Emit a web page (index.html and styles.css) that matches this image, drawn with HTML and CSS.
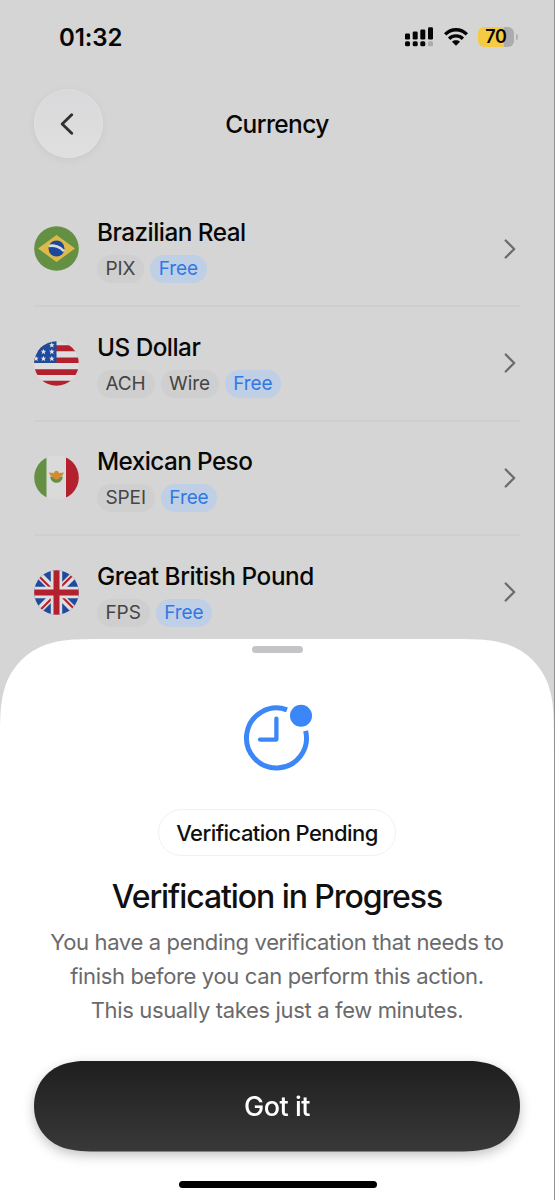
FILE: index.html
```html
<!DOCTYPE html>
<html lang="en">
<head>
<meta charset="utf-8">
<title>Currency</title>
<link rel="stylesheet" href="styles.css">
</head>
<body>
<div class="phone">
  <header class="status">
    <span class="time">01:32</span>
    <span class="indicators">
      <svg class="signal" width="29" height="20" viewBox="0 0 29 20"><g fill="#050505"><rect x="0" y="6.5" width="5" height="6" rx="1.3"/><rect x="7.7" y="4.5" width="5" height="8" rx="1.3"/><rect x="15.3" y="2.5" width="5" height="10" rx="1.3"/><rect x="23" y="0.3" width="5" height="12.2" rx="1.3"/><rect x="0" y="14.3" width="5" height="5" rx="1.5"/><rect x="7.7" y="14.3" width="5" height="5" rx="1.5"/><rect x="15.3" y="14.3" width="5" height="5" rx="1.5"/></g><rect x="23" y="14.3" width="5" height="5" rx="1.5" fill="#aaa"/></svg>
      <svg class="wifi" width="24" height="18" viewBox="0 0 24 18"><g fill="none" stroke="#050505" stroke-width="3.4"><path d="M1.2 6.4C7.2.2 16.8.2 22.8 6.4"/><path d="M5.1 10.7C9 6.9 15 6.9 18.9 10.7"/></g><path d="M8 13.7C10.2 11.8 13.8 11.8 16 13.7L12 17.7Z" fill="#050505"/></svg>
      <span class="battery"><span class="cell">70</span><i class="cap"></i></span>
    </span>
  </header>
  <nav class="bar">
    <button class="back" aria-label="Back"><svg width="14" height="22" viewBox="0 0 14 22"><path d="M11.7 1.8L2.2 11L11.7 20.2" fill="none" stroke="#303030" stroke-width="2.9" stroke-linecap="round" stroke-linejoin="round"/></svg></button>
    <h1 class="title">Currency</h1>
  </nav>
  <main class="list">
    <section class="row">
      <svg class="flag" viewBox="0 0 45 45"><circle cx="22.5" cy="22.5" r="22.3" fill="#649043"/><path d="M4 22.5L22.5 9L41 22.5L22.5 36Z" fill="#ddb94a"/><circle cx="22.5" cy="22.5" r="8" fill="#1d489a"/><path d="M15 20C20 18.8 26.5 20.8 30 25.2" fill="none" stroke="#dcdcdc" stroke-width="2.6"/></svg>
      <div class="info"><h2 class="name">Brazilian Real</h2><div class="chips"><span class="chip">PIX</span><span class="chip free">Free</span></div></div>
      <svg class="chevron" viewBox="0 0 12 20"><path d="M1.7 1.5L10.2 10L1.7 18.5"/></svg>
    </section>
    <section class="row">
      <svg class="flag" viewBox="0 0 45 45"><defs><clipPath id="round"><circle cx="22.5" cy="22.5" r="22.3"/></clipPath><path id="star" d="M0-2.9L.8-1H2.8L1.2.3L1.8 2.4L0 1.2L-1.8 2.4L-1.2.3L-2.8-1H-.8Z" fill="#e2e2e2"/></defs><g clip-path="url(#round)"><path d="M0 0H45V45H0Z" fill="#dedede"/><path d="M0 4.3H45V10.2H0ZM0 16.5H45V22H0ZM0 28.2H45V34H0ZM0 39.8H45V45H0Z" fill="#b4212e"/><path d="M0 0H22.5V22H0Z" fill="#204b9c"/><use href="#star" x="17.8" y="4.2"/><use href="#star" x="9.5" y="10.8"/><use href="#star" x="17.8" y="10.8"/><use href="#star" x="2" y="17.7"/><use href="#star" x="9.5" y="17.7"/><use href="#star" x="17.8" y="17.7"/></g></svg>
      <div class="info"><h2 class="name">US Dollar</h2><div class="chips"><span class="chip">ACH</span><span class="chip">Wire</span><span class="chip free">Free</span></div></div>
      <svg class="chevron" viewBox="0 0 12 20"><path d="M1.7 1.5L10.2 10L1.7 18.5"/></svg>
    </section>
    <section class="row">
      <svg class="flag" viewBox="0 0 45 45"><g clip-path="url(#round)"><path d="M0 0H45V45H0Z" fill="#dadada"/><path d="M0 0H12.5V45H0Z" fill="#649043"/><path d="M32 0H45V45H32Z" fill="#b4212e"/></g><path d="M16.2 21.5A6.3 6.3 0 0 0 28.8 21.5Z" fill="#649043"/><path d="M14.7 17.5L20 18L21 16H24L25 18L30 17.5L28.5 20.5L26 21.8Q25.5 24.5 22.5 24.5Q19.5 24.5 19 21.8L16.5 20.5Z" fill="#d28b31"/></svg>
      <div class="info"><h2 class="name snug">Mexican Peso</h2><div class="chips"><span class="chip">SPEI</span><span class="chip free">Free</span></div></div>
      <svg class="chevron" viewBox="0 0 12 20"><path d="M1.7 1.5L10.2 10L1.7 18.5"/></svg>
    </section>
    <section class="row">
      <svg class="flag" viewBox="0 0 45 45"><g clip-path="url(#round)"><path d="M0 0H45V45H0Z" fill="#204b9c"/><path d="M2 2L43 43M43 2L2 43" stroke="#dedede" stroke-width="7"/><path d="M2 3.2L19 20.2M41.8 2L25 18.8M26 24.8L43 41.8M3.2 43L20 26.2" stroke="#b4212e" stroke-width="2.1"/><path d="M22.5 0V45M0 22.5H45" stroke="#dedede" stroke-width="11.4"/><path d="M22.5 0V45M0 22.5H45" stroke="#b4212e" stroke-width="6"/></g></svg>
      <div class="info"><h2 class="name loose">Great British Pound</h2><div class="chips"><span class="chip">FPS</span><span class="chip free">Free</span></div></div>
      <svg class="chevron" viewBox="0 0 12 20"><path d="M1.7 1.5L10.2 10L1.7 18.5"/></svg>
    </section>
  </main>
  <section class="sheet">
    <i class="grabber"></i>
    <svg class="clock" width="72" height="70" viewBox="0 0 72 70"><g fill="none" stroke="#3b87f7"><path d="M46 6.9A30 30 0 1 0 64.6 27.8" stroke-width="5"/><path d="M35.4 15.6V36.6H19" stroke-width="4.3" stroke-linecap="round" stroke-linejoin="round"/></g><circle cx="60" cy="12.7" r="11" fill="#3b87f7"/></svg>
    <span class="pill">Verification Pending</span>
    <h2 class="heading">Verification in Progress</h2>
    <p class="copy">You have a pending verification that needs to<br>finish before you can perform this action.<br>This usually takes just a few minutes.</p>
    <div class="lift"><button class="action">Got it</button></div>
    <i class="home"></i>
  </section>
</div>
</body>
</html>
```

FILE: styles.css
```css
* { box-sizing: border-box; margin: 0; padding: 0; }
body { font-family: Inter, "Liberation Sans", sans-serif; background: #d5d5d5; color: #070707; }
button { border: 0; font: inherit; }
h1, h2 { font-weight: 500; white-space: nowrap; }
svg { display: block; flex: none; }
i { display: block; }

.phone { width: 555px; height: 1200px; display: flex; flex-direction: column; overflow: hidden; border-right: 1px solid #929292; }

.status { height: 74px; flex: none; display: flex; align-items: center; justify-content: space-between; padding: 0 36px 0 59px; }
.time { font-size: 24px; font-weight: 600; letter-spacing: -0.1px; }
.indicators { display: flex; align-items: center; }
.wifi { margin: 0 10px; }
.battery { display: flex; align-items: center; gap: 2px; }
.cell { width: 36px; height: 20px; border-radius: 6px; background: linear-gradient(90deg, #f4cb43 71%, #acacae 71%); font-size: 18px; font-weight: 600; line-height: 20px; text-align: center; letter-spacing: -0.2px; }
.cap { width: 2px; height: 6px; border-radius: 0 2px 2px 0; background: #b0b0b0; }

.bar { height: 100px; flex: none; display: grid; grid-template-columns: 69px 1fr 69px; align-items: center; padding: 0 34px; }
.back { width: 69px; height: 69px; margin-bottom: 1px; border-radius: 50%; background: linear-gradient(#d9d9db, #dfdfdf); box-shadow: 0 2px 8px rgba(0,0,0,.055), inset 0 0 0 1px rgba(255,255,255,.12); display: flex; align-items: center; justify-content: center; padding-right: 4px; }
.title { font-size: 24.5px; text-align: center; letter-spacing: -0.6px; }

.list { height: 465px; flex: none; padding: 18.6px 34px 0; }
.row { height: 114.5px; display: flex; align-items: center; border-bottom: 2px solid #cfcfcf; }
.row:last-child { border-bottom-color: transparent; }
.flag { width: 45px; height: 45px; margin-left: 0.3px; }
.info { flex: 1; padding: 3px 0 0 17.7px; }
.name { font-size: 24.3px; line-height: 30px; letter-spacing: -0.5px; }
.snug { letter-spacing: -0.58px; }
.loose { letter-spacing: -0.42px; }
.chips { display: flex; gap: 6px; margin-top: 8px; }
.chip { height: 28px; padding: 0 8.9px 0 8.5px; border-radius: 14px; background: #cfcfcf; color: #454545; font-size: 19px; line-height: 28px; letter-spacing: -0.1px; }
.free { background: #bfcfe6; color: #3178e4; }
.chevron { width: 12px; height: 20px; margin-right: 4px; fill: none; stroke: #6c6c6c; stroke-width: 2.3; stroke-linecap: round; stroke-linejoin: round; }

.sheet { height: 561px; flex: none; display: flex; flex-direction: column; align-items: center; background: #fff; color: #101010; clip-path: path("M0 111.6C0 79.5 0 63.4 4.8 48.9L5.5 46.1C12.3 27.2 27.2 12.3 46.1 5.5L48.9 4.8C63.4 0 79.5 0 111.6 0H442.4C474.5 0 490.6 0 505.1 4.8L507.9 5.5C526.8 12.3 541.7 27.2 548.5 46.1L549.2 48.9C554 63.4 554 79.5 554 111.6V561H0Z"); }
.grabber { width: 51px; height: 7px; border-radius: 4px; background: #c4c4c6; margin-top: 7px; }
.clock { margin-top: 50px; }
.pill { height: 47px; margin-top: 36px; padding: 1px 17.5px 0; border: 1px solid #f1f1f1; border-radius: 24px; font-size: 22px; font-weight: 500; line-height: 45px; letter-spacing: -0.55px; white-space: nowrap; }
.heading { margin-top: 21px; font-size: 32px; line-height: 40px; letter-spacing: -1.08px; }
.copy { margin-top: 8px; font-size: 22px; line-height: 34px; letter-spacing: -0.35px; color: #6a6a6c; text-align: center; white-space: nowrap; }
.lift { margin-top: 33.5px; filter: drop-shadow(0 4px 6px rgba(0,0,0,.24)); }
.action { display: block; width: 486px; height: 91px; padding-top: 1px; background: linear-gradient(#1e1e1e, #393939); color: #fff; font-size: 27px; font-weight: 500; letter-spacing: -0.5px; clip-path: path("M0 45.5C0 25 12 9.5 30 3.5C40 .4 52 0 66 0H420C434 0 446 .4 456 3.5C474 9.5 486 25 486 45.5C486 66 474 81.5 456 87.5C446 90.6 434 91 420 91H66C52 91 40 90.6 30 87.5C12 81.5 0 66 0 45.5Z"); }
.home { width: 198px; height: 7px; border-radius: 4px; background: #000; margin-top: 29.8px; margin-left: 1px; }
```
